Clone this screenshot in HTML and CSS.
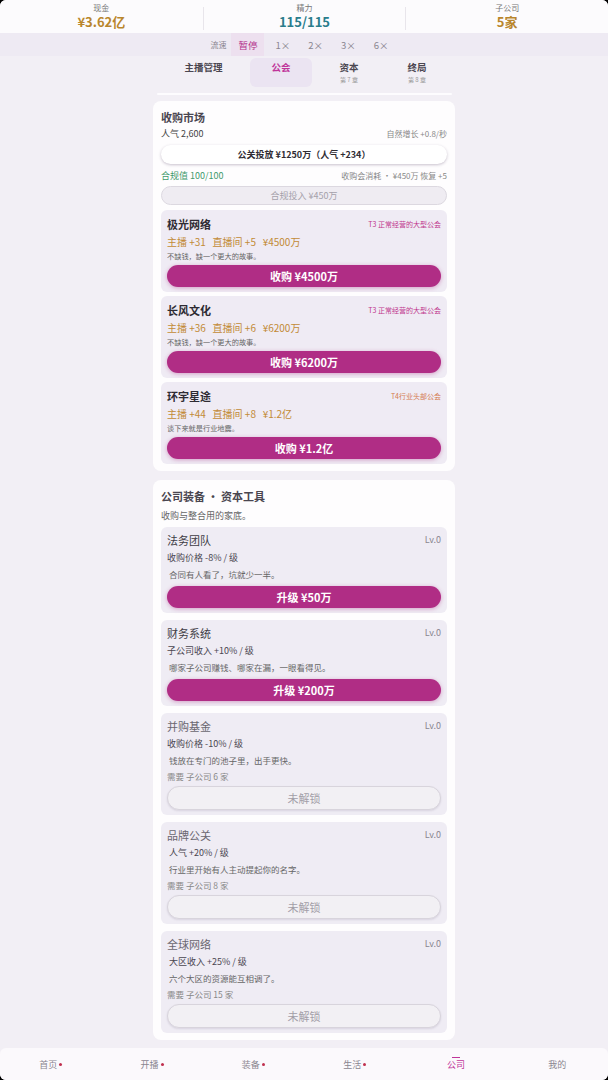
FILE: index.html
```html
<!DOCTYPE html>
<html lang="zh-CN">
<head>
    <meta charset="UTF-8">
    <meta name="viewport" content="width=device-width, initial-scale=1.0">
    <title>公司</title>
    <link rel="stylesheet" href="styles.css">
</head>
<body>
<div class="app">

    <header class="stats">
        <div class="stat">
            <span class="stat-label">现金</span>
            <span class="stat-value gold">¥3.62亿</span>
        </div>
        <div class="stat">
            <span class="stat-label">精力</span>
            <span class="stat-value teal">115/115</span>
        </div>
        <div class="stat">
            <span class="stat-label">子公司</span>
            <span class="stat-value gold">5家</span>
        </div>
    </header>

    <div class="speed">
        <span class="speed-label">流速</span>
        <span class="speed-item active">暂停</span>
        <span class="speed-item">1×</span>
        <span class="speed-item">2×</span>
        <span class="speed-item">3×</span>
        <span class="speed-item">6×</span>
    </div>

    <nav class="tabs">
        <a class="tab">主播管理</a>
        <a class="tab active">公会</a>
        <a class="tab">资本<small>第 7 章</small></a>
        <a class="tab">终局<small>第 8 章</small></a>
    </nav>
    <div class="tabs-line"></div>

    <main class="content">
        <section class="card">
            <h2 class="card-title">收购市场</h2>
            <div class="row">
                <span>人气 2,600</span>
                <span class="muted">自然增长 +0.8/秒</span>
            </div>
            <button class="pill-white">公关投放 ¥1250万（人气 +234）</button>
            <div class="row">
                <span class="green">合规值 100/100</span>
                <span class="muted">收购会消耗 · ¥450万 恢复 +5</span>
            </div>
            <button class="pill-disabled">合规投入 ¥450万</button>

            <div class="guild">
                <div class="row">
                    <span class="guild-name">极光网络</span>
                    <span class="tag">T3 正常经营的大型公会</span>
                </div>
                <div class="guild-stats">主播 +31 &nbsp; 直播间 +5 &nbsp; ¥4500万</div>
                <div class="guild-note">不缺钱，缺一个更大的故事。</div>
                <button class="btn-main">收购 ¥4500万</button>
            </div>

            <div class="guild">
                <div class="row">
                    <span class="guild-name">长风文化</span>
                    <span class="tag">T3 正常经营的大型公会</span>
                </div>
                <div class="guild-stats">主播 +36 &nbsp; 直播间 +6 &nbsp; ¥6200万</div>
                <div class="guild-note">不缺钱，缺一个更大的故事。</div>
                <button class="btn-main">收购 ¥6200万</button>
            </div>

            <div class="guild">
                <div class="row">
                    <span class="guild-name">环宇星途</span>
                    <span class="tag orange">T4行业头部公会</span>
                </div>
                <div class="guild-stats">主播 +44 &nbsp; 直播间 +8 &nbsp; ¥1.2亿</div>
                <div class="guild-note">谈下来就是行业地震。</div>
                <button class="btn-main">收购 ¥1.2亿</button>
            </div>
        </section>

        <section class="card">
            <h2 class="card-title">公司装备 · 资本工具</h2>
            <p class="card-sub">收购与整合用的家底。</p>

            <div class="gear">
                <div class="row">
                    <span class="gear-name">法务团队</span>
                    <span class="lv">Lv.0</span>
                </div>
                <div class="gear-effect">收购价格 -8% / 级</div>
                <div class="gear-note">&nbsp;合同有人看了，坑就少一半。</div>
                <button class="btn-main">升级 ¥50万</button>
            </div>

            <div class="gear">
                <div class="row">
                    <span class="gear-name">财务系统</span>
                    <span class="lv">Lv.0</span>
                </div>
                <div class="gear-effect">子公司收入 +10% / 级</div>
                <div class="gear-note">&nbsp;哪家子公司赚钱、哪家在漏，一眼看得见。</div>
                <button class="btn-main">升级 ¥200万</button>
            </div>

            <div class="gear locked">
                <div class="row">
                    <span class="gear-name">并购基金</span>
                    <span class="lv">Lv.0</span>
                </div>
                <div class="gear-effect">收购价格 -10% / 级</div>
                <div class="gear-note">&nbsp;钱放在专门的池子里，出手更快。</div>
                <div class="gear-need">需要 子公司 6 家</div>
                <button class="btn-locked">未解锁</button>
            </div>

            <div class="gear locked">
                <div class="row">
                    <span class="gear-name">品牌公关</span>
                    <span class="lv">Lv.0</span>
                </div>
                <div class="gear-effect">&nbsp;人气 +20% / 级</div>
                <div class="gear-note">&nbsp;行业里开始有人主动提起你的名字。</div>
                <div class="gear-need">需要 子公司 8 家</div>
                <button class="btn-locked">未解锁</button>
            </div>

            <div class="gear locked">
                <div class="row">
                    <span class="gear-name">全球网络</span>
                    <span class="lv">Lv.0</span>
                </div>
                <div class="gear-effect">&nbsp;大区收入 +25% / 级</div>
                <div class="gear-note">&nbsp;六个大区的资源能互相调了。</div>
                <div class="gear-need">需要 子公司 15 家</div>
                <button class="btn-locked">未解锁</button>
            </div>
        </section>
    </main>

    <footer class="bottom-nav">
        <a class="nav-item">首页<i class="dot"></i></a>
        <a class="nav-item">开播<i class="dot"></i></a>
        <a class="nav-item">装备<i class="dot"></i></a>
        <a class="nav-item">生活<i class="dot"></i></a>
        <a class="nav-item active">公司</a>
        <a class="nav-item">我的</a>
    </footer>

</div>
</body>
</html>
```

FILE: styles.css
```css
html {
    background-color: #000;
}

body {
    margin: 0;
    padding: 0;
    font-family: "Noto Sans CJK SC", "Noto Sans", sans-serif;
    color: #333;
}

.app {
    width: 608px;
    height: 1080px;
    background-color: #f2eff5;
    border-radius: 6px;
    overflow: hidden;
    display: flex;
    flex-direction: column;
}

/* top stats */
.stats {
    display: grid;
    grid-template-columns: 1fr 1fr 1fr;
    height: 33px;
    background-color: #fcfbfd;
    box-sizing: border-box;
    padding-top: 3px;
}

.stat {
    display: flex;
    flex-direction: column;
    align-items: center;
    border-left: 1px solid #e8e5eb;
    margin: 4px 0 4px;
}

.stat:first-child {
    border-left: none;
}

.stat-label {
    font-size: 8px;
    line-height: 10px;
    color: #777;
    margin-top: -4px;
}

.stat-value {
    font-size: 13px;
    line-height: 17px;
    font-weight: 700;
}

.gold {
    color: #b9862c;
}

.teal {
    color: #2a7d8c;
}

/* speed */
.speed {
    display: flex;
    justify-content: center;
    align-items: stretch;
    height: 23px;
    background-color: #eeeaf3;
    color: #8a8690;
}

.speed-label {
    display: flex;
    align-items: center;
    padding: 0 5px 0 0;
    font-size: 8px;
}

.speed-item {
    display: flex;
    align-items: center;
    padding: 0 9px;
    font-size: 9.5px;
}

.speed-item.active {
    background-color: #ede0ef;
    color: #b3308b;
    padding: 0 7px;
    margin-right: 2px;
}

/* tabs */
.tabs {
    display: flex;
    justify-content: center;
    gap: 7px;
    height: 29px;
    padding: 2px 0 6px 3px;
}

.tab {
    display: flex;
    flex-direction: column;
    align-items: center;
    padding: 2px 21px 0;
    font-size: 9.5px;
    font-weight: 700;
    color: #4a4650;
    border-radius: 6px;
}

.tab small {
    font-size: 6px;
    font-weight: 400;
    color: #999;
    margin-top: 1px;
}

.tab.active {
    background-color: #ebe4f2;
    color: #c0359a;
}

.tabs-line {
    width: 295px;
    height: 2px;
    margin: 0 auto;
    background-color: #fdfcfe;
    border-radius: 1px;
}

/* content */
.content {
    width: 302px;
    margin: 0 auto;
    padding-top: 6px;
    display: flex;
    flex-direction: column;
    gap: 9px;
    flex: 1;
}

.card {
    background-color: #fefdfe;
    border-radius: 8px;
    padding: 7px 8px 7px;
    display: flex;
    flex-direction: column;
}

.card-title {
    margin: 0;
    font-size: 11px;
    line-height: 18px;
    font-weight: 700;
    color: #4a4650;
}

.card-sub {
    margin: 5px 0 5px;
    font-size: 9px;
    line-height: 12px;
    color: #666;
}

.row {
    display: flex;
    justify-content: space-between;
    align-items: center;
    font-size: 9px;
    line-height: 16px;
    color: #444;
}

.muted {
    color: #888;
    font-size: 8px;
}

.green {
    color: #3e9a6c;
}

.pill-white {
    display: block;
    width: 100%;
    height: 19px;
    margin: 3px 0 4px;
    border: none;
    border-radius: 10px;
    background-color: #fff;
    box-shadow: 0 1px 3px rgba(60, 40, 80, 0.28);
    font-family: inherit;
    font-size: 9px;
    font-weight: 700;
    color: #2f2c33;
}

.pill-disabled {
    display: block;
    width: 100%;
    height: 19px;
    margin: 2px 0 1px;
    border: 1px solid #dcd8e0;
    border-radius: 10px;
    background-color: #efecf2;
    font-family: inherit;
    font-size: 9px;
    color: #a5a1aa;
}

/* guild cards */
.guild {
    background-color: #efebf4;
    border-radius: 6px;
    padding: 5px 6px 5px;
    margin-top: 4px;
}

.guild-name {
    font-size: 11px;
    font-weight: 700;
    color: #2e2b33;
    line-height: 18px;
}

.tag {
    font-size: 7px;
    color: #c0378e;
}

.tag.orange {
    color: #d47a4e;
}

.guild-stats {
    font-size: 10px;
    line-height: 16px;
    color: #c28a36;
    margin-top: 1px;
}

.guild-note {
    font-size: 7.2px;
    line-height: 12px;
    color: #666;
}

.btn-main {
    display: block;
    width: 100%;
    height: 22px;
    margin-top: 3px;
    border: none;
    border-radius: 11px;
    background-color: #b02d85;
    box-shadow: 0 1px 4px rgba(176, 45, 133, 0.4);
    font-family: inherit;
    font-size: 11px;
    font-weight: 700;
    color: #fff;
}

/* gear cards */
.gear {
    background-color: #efecf4;
    border-radius: 6px;
    padding: 4px 6px 5px;
    margin-bottom: 7px;
}

.gear:last-child {
    margin-bottom: 0;
}

.gear-name {
    font-size: 11px;
    line-height: 18px;
    color: #403c45;
}

.locked .gear-name {
    color: #6a6670;
}

.lv {
    font-size: 9px;
    color: #8a8690;
}

.gear-effect {
    font-size: 9px;
    line-height: 17px;
    color: #4a4650;
}

.gear-note {
    font-size: 8.5px;
    line-height: 17px;
    color: #666;
}

.gear-need {
    font-size: 8.5px;
    line-height: 15px;
    color: #888;
}

.btn-locked {
    display: block;
    width: 100%;
    height: 24px;
    margin-top: 2px;
    border: 1px solid #d8d4dc;
    border-radius: 12px;
    background-color: #f2f0f4;
    box-shadow: 0 1px 2px rgba(60, 40, 80, 0.12);
    font-family: inherit;
    font-size: 11px;
    color: #a29ea7;
}

/* bottom nav */
.bottom-nav {
    display: grid;
    grid-template-columns: repeat(6, 1fr);
    height: 32px;
    background-color: #fbf9fc;
    border-radius: 6px 6px 0 0;
}

.nav-item {
    display: flex;
    align-items: center;
    justify-content: center;
    font-size: 9px;
    color: #8a8690;
    position: relative;
}

.nav-item.active {
    color: #c0359a;
}

.nav-item.active::before {
    content: "";
    position: absolute;
    top: 9px;
    left: 50%;
    width: 8px;
    height: 1px;
    margin-left: -4px;
    background-color: #c0359a;
}

.dot {
    display: inline-block;
    width: 3px;
    height: 3px;
    border-radius: 50%;
    background-color: #c0304f;
    margin-left: 2px;
}
```
